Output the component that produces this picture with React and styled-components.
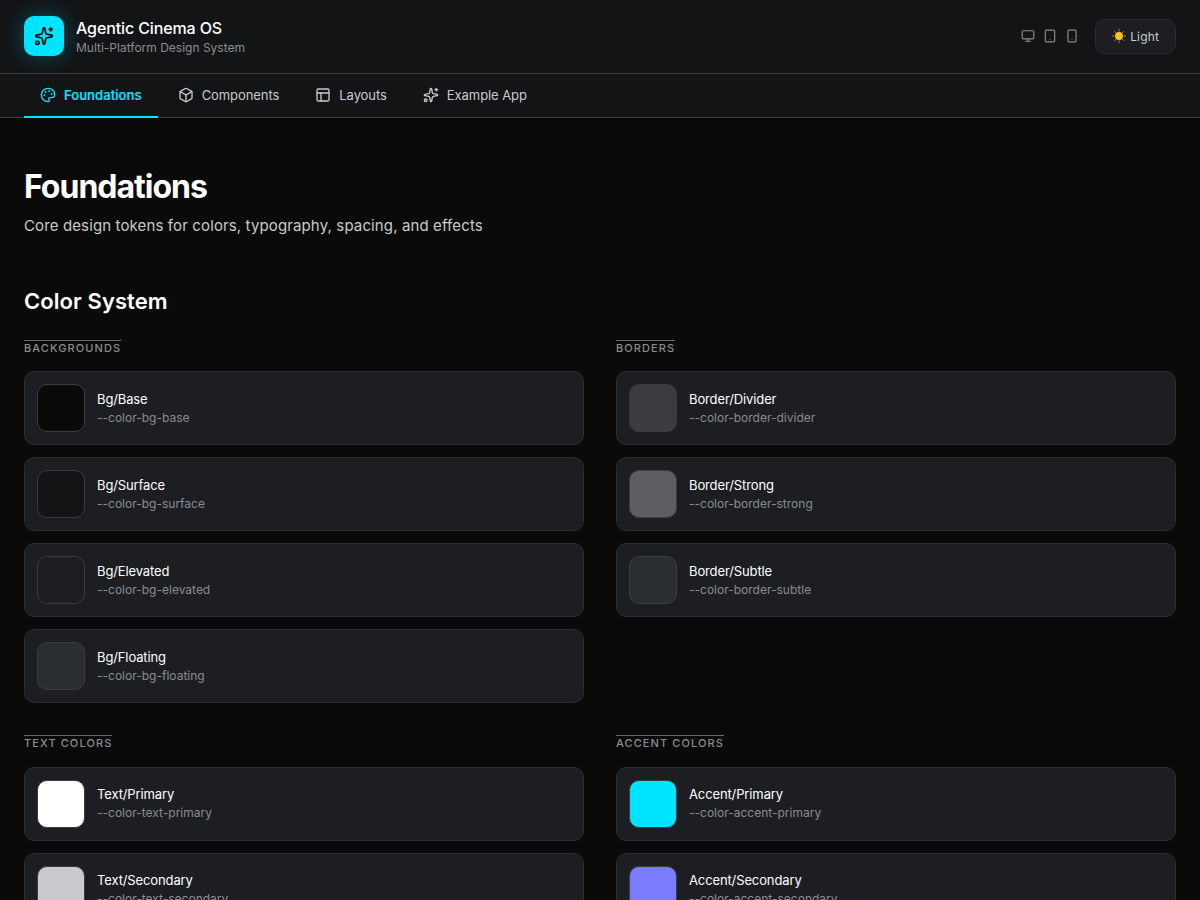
import styled, { createGlobalStyle } from "styled-components";
import {
  Sparkles,
  Palette,
  Box,
  PanelsTopLeft,
  Monitor,
  Tablet,
  Smartphone,
} from "lucide-react";

const GROUPS = [
  {
    title: "Backgrounds",
    tokens: [
      { name: "Bg/Base", token: "--color-bg-base", color: "#0a0a0b" },
      { name: "Bg/Surface", token: "--color-bg-surface", color: "#131416" },
      { name: "Bg/Elevated", token: "--color-bg-elevated", color: "#1c1e22" },
      { name: "Bg/Floating", token: "--color-bg-floating", color: "#2a2d32" },
    ],
  },
  {
    title: "Borders",
    tokens: [
      { name: "Border/Divider", token: "--color-border-divider", color: "#3a3c41" },
      { name: "Border/Strong", token: "--color-border-strong", color: "#5c5e63" },
      { name: "Border/Subtle", token: "--color-border-subtle", color: "#2a2d32" },
    ],
  },
  {
    title: "Text Colors",
    tokens: [
      { name: "Text/Primary", token: "--color-text-primary", color: "#ffffff" },
      { name: "Text/Secondary", token: "--color-text-secondary", color: "#c8cacd" },
    ],
  },
  {
    title: "Accent Colors",
    tokens: [
      { name: "Accent/Primary", token: "--color-accent-primary", color: "#00e5ff" },
      { name: "Accent/Secondary", token: "--color-accent-secondary", color: "#7c7cff" },
    ],
  },
];

const TABS = [
  { label: "Foundations", icon: Palette, active: true },
  { label: "Components", icon: Box },
  { label: "Layouts", icon: PanelsTopLeft },
  { label: "Example App", icon: Sparkles },
];

const SunIcon = () => (
  <svg width="14" height="14" viewBox="0 0 14 14">
    <g stroke="#c98a1a" strokeWidth="1" strokeLinecap="round">
      <path d="M7 .6v1.6M7 11.8v1.6M.6 7h1.6M11.8 7h1.6M2.5 2.5l1.1 1.1M10.4 10.4l1.1 1.1M2.5 11.5l1.1-1.1M10.4 3.6l1.1-1.1" />
    </g>
    <circle cx="7" cy="7" r="3.9" fill="#fcc21b" />
  </svg>
);

const App = () => {
  return (
    <>
      <GlobalStyle />
      <Header>
        <Brand>
          <Logo>
            <Sparkles size={20} strokeWidth={2} />
          </Logo>
          <div>
            <BrandName>Agentic Cinema OS</BrandName>
            <BrandSub>Multi-Platform Design System</BrandSub>
          </div>
        </Brand>
        <Actions>
          <Devices>
            <Monitor size={14} />
            <Tablet size={14} />
            <Smartphone size={14} />
          </Devices>
          <ThemeButton>
            <SunIcon />
            Light
          </ThemeButton>
        </Actions>
      </Header>
      <Nav>
        {TABS.map(({ label, icon: Icon, active }) => (
          <Tab key={label} $active={active}>
            <Icon size={16} />
            {label}
          </Tab>
        ))}
      </Nav>
      <Main>
        <Title>Foundations</Title>
        <Subtitle>Core design tokens for colors, typography, spacing, and effects</Subtitle>
        <SectionTitle>Color System</SectionTitle>
        <Grid>
          {GROUPS.map((group) => (
            <section key={group.title}>
              <GroupLabel>{group.title}</GroupLabel>
              <TokenList>
                {group.tokens.map((item) => (
                  <TokenCard key={item.name}>
                    <Swatch $color={item.color} />
                    <div>
                      <TokenName>{item.name}</TokenName>
                      <TokenVar>{item.token}</TokenVar>
                    </div>
                  </TokenCard>
                ))}
              </TokenList>
            </section>
          ))}
        </Grid>
      </Main>
    </>
  );
};

//Styled
const GlobalStyle = createGlobalStyle`
  html, body {
    margin: 0;
    height: 900px;
    overflow: hidden;
    background: #0a0a0b;
    color: #fff;
    font-family: Inter, "Liberation Sans", sans-serif;
  }
`;

const Header = styled.header`
  display: flex;
  align-items: center;
  justify-content: space-between;
  box-sizing: border-box;
  height: 74px;
  padding: 0 24px 1px;
  background: #131416;
  border-bottom: 1px solid #3a3c41;
`;

const Brand = styled.div`
  display: flex;
  align-items: center;
  gap: 12px;
`;

const Logo = styled.div`
  display: flex;
  align-items: center;
  justify-content: center;
  width: 40px;
  height: 40px;
  border-radius: 10px;
  background: #00e5ff;
  color: #0a0a0b;
  box-shadow: 0 0 20px rgba(0, 229, 255, 0.3);
`;

const BrandName = styled.div`
  font-size: 16px;
  font-weight: 500;
  line-height: 24px;
  letter-spacing: -0.12px;
  color: #fff;
`;

const BrandSub = styled.div`
  font-size: 12px;
  line-height: 16px;
  color: #8a8c91;
`;

const Actions = styled.div`
  display: flex;
  align-items: center;
  gap: 16px;
`;

const Devices = styled.div`
  display: flex;
  align-items: center;
  gap: 8px;
  color: #8a8c91;
`;

const ThemeButton = styled.button`
  display: flex;
  align-items: center;
  gap: 4px;
  height: 35px;
  padding: 0 16px;
  border: 1px solid #2a2d32;
  border-radius: 10px;
  background: #1c1e22;
  color: #c8cacd;
  font-family: inherit;
  font-size: 12px;
  font-weight: 400;
  letter-spacing: 0.15px;
`;

const Nav = styled.nav`
  display: flex;
  gap: 4px;
  height: 43px;
  padding: 0 24px;
  background: #131416;
  border-bottom: 1px solid #3a3c41;
`;

const Tab = styled.a`
  display: flex;
  align-items: center;
  gap: 8px;
  padding: 0 16px;
  margin-bottom: -1px;
  font-size: 13px;
  font-weight: ${(props) => (props.$active ? 600 : 400)};
  letter-spacing: ${(props) => (props.$active ? 0 : "-0.07px")};
  color: ${(props) => (props.$active ? "#00e5ff" : "#c8cacd")};
  border-bottom: 2px solid ${(props) => (props.$active ? "#00e5ff" : "transparent")};
  box-sizing: border-box;
  height: 44px;
`;

const Main = styled.main`
  padding: 48px 24px 0;
`;

const Title = styled.h1`
  margin: 1px 0 7px;
  font-size: 32px;
  font-weight: 650;
  line-height: 40px;
  letter-spacing: -1px;
  color: #fff;
`;

const Subtitle = styled.p`
  margin: 0 0 47px;
  font-size: 15px;
  line-height: 24px;
  letter-spacing: 0.125px;
  color: #c8cacd;
`;

const SectionTitle = styled.h2`
  margin: 0 0 22.9px;
  font-size: 22px;
  font-weight: 600;
  line-height: 32px;
  letter-spacing: 0.08px;
  color: #fff;
`;

const Grid = styled.div`
  display: grid;
  grid-template-columns: 560px 560px;
  column-gap: 32px;
  row-gap: 32px;
`;

const GroupLabel = styled.h3`
  width: fit-content;
  margin: 0 0 16.5px;
  font-size: 11px;
  font-weight: 500;
  line-height: 14px;
  letter-spacing: 1.1px;
  text-transform: uppercase;
  color: #8a8c91;
  border-top: 1px solid #6a6c71;
`;

const TokenList = styled.div`
  display: flex;
  flex-direction: column;
  gap: 12px;
`;

const TokenCard = styled.div`
  display: flex;
  align-items: center;
  gap: 12px;
  padding: 12px;
  border: 1px solid #2a2d32;
  border-radius: 10px;
  background: #1c1e22;
`;

const Swatch = styled.div`
  width: 48px;
  height: 48px;
  box-sizing: border-box;
  border: 1px solid #3a3c41;
  border-radius: 10px;
  background: ${(props) => props.$color};
`;

const TokenName = styled.div`
  font-size: 13px;
  font-weight: 400;
  line-height: 18px;
  letter-spacing: -0.12px;
  color: #fff;
`;

const TokenVar = styled.div`
  margin-top: 1px;
  font-size: 12px;
  line-height: 18px;
  color: #8a8c91;
`;

export default App;
